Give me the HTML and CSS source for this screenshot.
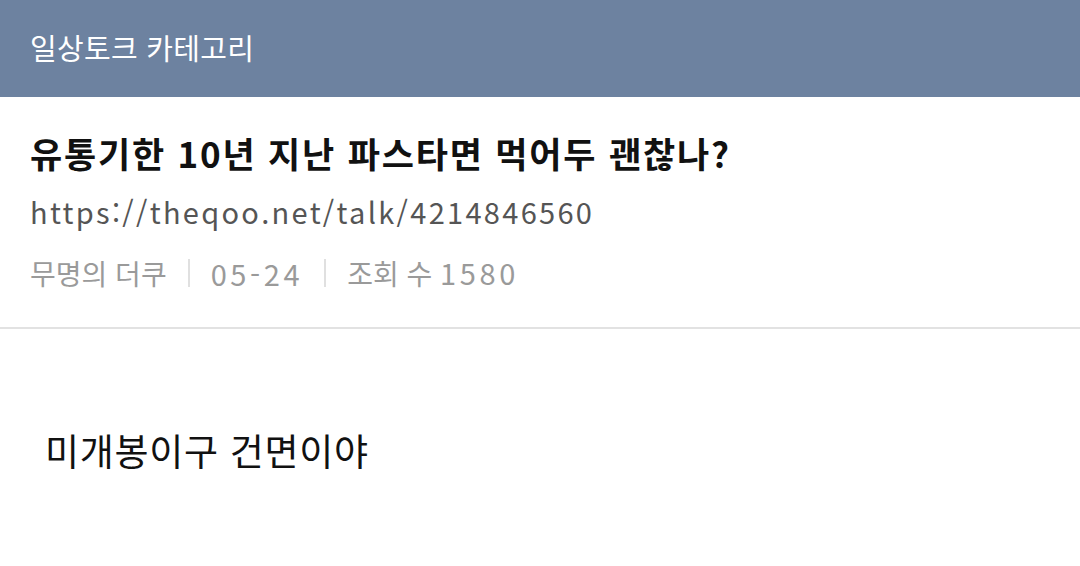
FILE: index.html
```html
<!DOCTYPE html>
<html lang="ko">
<head>
<meta charset="utf-8">
<link rel="stylesheet" href="styles.css">
</head>
<body>
<header class="topbar">
  <h1 class="topbar-title">일상토크 카테고리</h1>
</header>
<section class="post-head">
  <h2 class="post-title">유통기한 10년 지난 파스타면 먹어두 괜찮나?</h2>
  <div class="post-url">https://theqoo.net/talk/4214846560</div>
  <div class="post-meta">
    <span>무명의 더쿠</span>
    <span class="sep"></span>
    <span class="num">05-24</span>
    <span class="sep"></span>
    <span>조회 수 <span class="num">1580</span></span>
  </div>
</section>
<article class="post-body">
  <p>미개봉이구 건면이야</p>
</article>
</body>
</html>
```

FILE: styles.css
```css
html, body {
  margin: 0;
  padding: 0;
  background: #ffffff;
  font-family: "Noto Sans CJK KR", "Noto Sans", sans-serif;
}
.topbar {
  height: 97px;
  background: #6d82a0;
  display: flex;
  align-items: center;
  padding: 0 30px;
}
.topbar-title {
  margin: 0;
  color: #ffffff;
  font-size: 29px;
  font-weight: 400;
  line-height: 1;
  padding-bottom: 2px;
  letter-spacing: 0.3px;
}
.post-head {
  padding: 32px 30px 0;
  border-bottom: 2px solid #e2e2e2;
  box-sizing: border-box;
  height: 232px;
}
.post-title {
  margin: 0;
  font-size: 35px;
  font-weight: 700;
  color: #111;
  line-height: 48px;
  letter-spacing: 1.8px;
}
.post-url {
  margin-top: 14px;
  font-size: 29px;
  color: #555;
  line-height: 40px;
  letter-spacing: 2.3px;
}
.post-meta {
  margin-top: 21px;
  font-size: 28px;
  color: #9a9a9a;
  line-height: 40px;
  display: flex;
  align-items: center;
  gap: 21px;
}
.num {
  font-size: 29px;
  letter-spacing: 3.6px;
}
.sep {
  width: 2px;
  height: 28px;
  background: #e0e0e0;
}
.post-body {
  padding: 99px 45px 0;
}
.post-body p {
  margin: 0;
  font-size: 37px;
  color: #111;
  line-height: 44px;
  letter-spacing: 0.7px;
}
```
